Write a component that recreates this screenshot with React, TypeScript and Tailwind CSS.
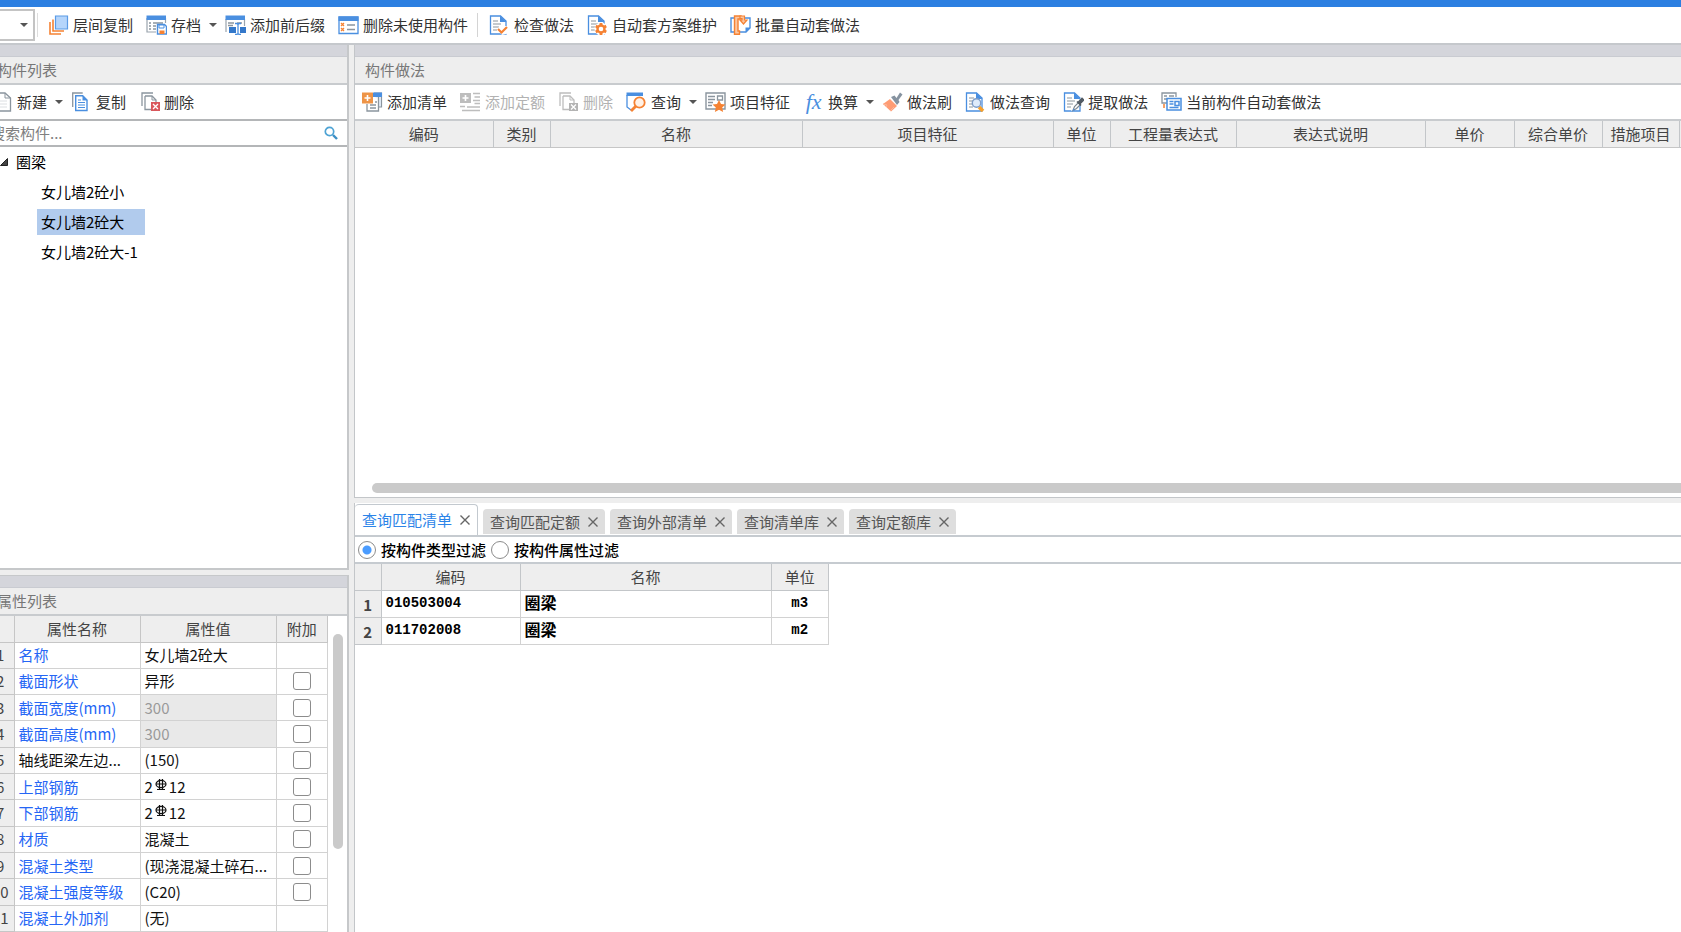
import { useState } from "react";
import type { ReactNode } from "react";

const BLUE = "#4a8fe0";
const ORANGE = "#f58233";
const GRAY = "#8b959e";

function Icon({ children }: { children: ReactNode }) {
  return (
    <svg className="h-5 w-[21px] shrink-0" viewBox="0 0 21 20" fill="none" aria-hidden="true">
      {children}
    </svg>
  );
}

// 带折角的文档轮廓
function Doc() {
  return (
    <g>
      <path d="M1.500 1h10L17 6v13H1.500z" fill="#fff" stroke={BLUE} strokeWidth="1.300" />
      <path d="M11 .500v6.500h6.500z" fill={BLUE} />
      <path d="M4 6h5M4 9h8M4 12h6M4 15h4" stroke={GRAY} strokeWidth="1.200" />
    </g>
  );
}

const icons = {
  layerCopy: (
    <Icon>
      <path d="M2 7v12h11M5 4.500v11.500h11" stroke={ORANGE} strokeWidth="1.600" />
      <path d="M7.500 1h12v13h-12z" fill="#b5d5fb" stroke="#5b9be6" strokeWidth="1.200" />
    </Icon>
  ),
  archive: (
    <Icon>
      <path d="M1 3v14h9M19.500 3v5" stroke="#9aa4ad" strokeWidth="1.200" />
      <path d="M.5.500h19.500V5H.5z" fill={BLUE} />
      <path d="M3 8h2m2 0h10M3 11h2m2 0h3M3 14h2m2 0h3" stroke={GRAY} strokeWidth="1.300" />
      <path d="M11.500 9.500h7l2 2v7.500h-9z" fill="#fff" stroke={BLUE} strokeWidth="1.400" />
      <path d="M13 10h5v3h-5z" fill="#fff" stroke={BLUE} />
      <path d="M13.500 15.500h5V19h-5z" fill={ORANGE} />
    </Icon>
  ),
  affix: (
    <Icon>
      <path d="M1 4v13M19.500 4v7" stroke="#9aa4ad" strokeWidth="1.200" />
      <path d="M.5.500H20V5H.5z" fill={BLUE} />
      <path d="M3 8h6m3 0h5M3 10.500h5" stroke={GRAY} strokeWidth="1.300" />
      <path d="M4 12h7v6H4zM15 12h6v6h-6z" fill="#3478ca" />
      <path d="M10 8.500h2l1 1 1-1h2M13 9v10m-3 .500h2l1-1 1 1h2" stroke={BLUE} strokeWidth="1.300" />
    </Icon>
  ),
  unused: (
    <Icon>
      <path d="M1 2h19v16.500H1z" fill="#fff" stroke={BLUE} strokeWidth="1.300" />
      <path d="M.5 1.500h20V6H.5z" fill={BLUE} />
      <path d="m3 8 3 3m0-3-3 3m0 2 3 3m0-3-3 3" stroke={ORANGE} strokeWidth="1.300" />
      <path d="M9 10h8M9 14.500h8" stroke={GRAY} strokeWidth="1.500" />
    </Icon>
  ),
  check: (
    <Icon>
      <Doc />
      <path d="M10 11h11v7l-8 2-4-5z" fill="#fff" />
      <path d="m9 14 3.500 3.500L18 12" stroke={ORANGE} strokeWidth="2.200" />
    </Icon>
  ),
  scheme: (
    <Icon>
      <Doc />
      <circle cx="14" cy="14" r="6.500" fill="#fff" />
      <path
        d="M14 8v12M8.800 11l10.400 6M8.800 17l10.400-6"
        stroke={ORANGE}
        strokeWidth="2.800"
      />
      <circle cx="14" cy="14" r="3.500" fill="#fff" stroke={ORANGE} strokeWidth="2.400" />
    </Icon>
  ),
  batch: (
    <Icon>
      <path d="M4 3H1v14h3M15 3h5v10l-4 4h-6" stroke={BLUE} strokeWidth="1.400" />
      <path d="M15.500 17.500v-5h5z" fill={BLUE} />
      <path d="M11 1H4.500v18.300h5V16H8V4h3z" fill="#fbc7a3" stroke={ORANGE} strokeWidth="1.400" />
      <path d="M10 1h4.500v4H17l-3.500 4L10 5h2V3.500h-2z" fill="#fbc7a3" stroke={ORANGE} strokeWidth="1.200" />
    </Icon>
  ),
  create: (
    <Icon>
      <path d="M3 1h10l5.500 5v13H3z" fill="#fff" stroke={GRAY} strokeWidth="1.300" />
      <path d="M13 1v5h5.500" stroke={GRAY} />
      <path d="M6 9h9M6 12h9M6 15h9" stroke="#dcdfe2" />
    </Icon>
  ),
  copy: (
    <Icon>
      <path d="M1.700 15V1h10" stroke={GRAY} strokeWidth="1.300" />
      <path d="M4.700 3.700h7L16 8v10.500H4.700z" fill="#fff" stroke={BLUE} strokeWidth="1.400" />
      <path d="M11.500 3.500V8.500h5z" fill={BLUE} />
      <path d="M7 8h3M7 10.500h7M7 13h7M7 15.500h7" stroke={BLUE} strokeWidth="1.200" />
    </Icon>
  ),
  remove: (
    <Icon>
      <path d="M3 14V1h11M6 4h7l4 4v4M6 4v13.500h6" stroke={GRAY} strokeWidth="1.300" />
      <path d="M13 4v4h4" stroke={GRAY} />
      <path d="M12 10h9v9h-9z" fill="#d9575c" />
      <path d="m14 12 5 5m0-5-5 5" stroke="#fff" strokeWidth="1.300" />
    </Icon>
  ),
  removeOff: (
    <Icon>
      <path d="M2 14V1h11M5 4h7l4 4v4M5 4v13.500h6" stroke="#bdbdbd" strokeWidth="1.300" />
      <path d="M12 4v4h4" stroke="#bdbdbd" />
      <path d="M11 11h9v8h-9z" fill="#b3b3b3" />
      <path d="m13 12.500 5 5m0-5-5 5" stroke="#fff" strokeWidth="1.300" />
    </Icon>
  ),
  addList: (
    <Icon>
      <path d="M12 1h7.500v14H17" fill="#e8f1fc" stroke={GRAY} strokeWidth="1.200" />
      <path d="M11 .500h9V5h-9z" fill={BLUE} />
      <path d="M16.500 5v14H5v-7" fill="#fff" stroke={GRAY} strokeWidth="1.300" />
      <path d="M8 13h6M8 16h6M13 10h2" stroke={GRAY} strokeWidth="1.300" />
      <path d="M0 .500h11v11H0z" fill="#ee9447" />
      <path d="M5.500 3v6M2.500 6h6" stroke="#fff" strokeWidth="1.600" />
    </Icon>
  ),
  addQuota: (
    <Icon>
      <path d="M0 1h11v10H0z" fill="#bdbdbd" />
      <path d="M5.500 3v6M2.500 6h6" stroke="#fff" strokeWidth="1.600" />
      <path d="M13 1.500h7M14.500 5H20M13 8.500h7M14.500 11.500H20M7 15h13M0 14.500h5M2 18.500h18" stroke="#bdbdbd" strokeWidth="1.500" />
    </Icon>
  ),
  search: (
    <Icon>
      <path d="M1 3v12l4 3" stroke={BLUE} strokeWidth="1.300" />
      <path d="M.5.500H17V4H.5z" fill={BLUE} />
      <path d="m5 19 5-5" stroke={ORANGE} strokeWidth="2.800" />
      <circle cx="13.500" cy="10.500" r="5.200" fill="#fff1e6" stroke={ORANGE} strokeWidth="1.800" />
    </Icon>
  ),
  feature: (
    <Icon>
      <path d="M1 1h19v16H1z" fill="#fff" stroke={GRAY} strokeWidth="1.400" />
      <path d="M3 4.500h7M3 7.500h7M3 10.500h5M3 13.500h4M12.500 4h5v4h-5z" stroke={GRAY} strokeWidth="1.300" />
      <path d="m14 8 2 4 4.500.500-3.300 3 .900 4.500-4.100-2.200L9.900 20l.900-4.500-3.300-3L12 12z" fill={ORANGE} />
    </Icon>
  ),
  brush: (
    <Icon>
      <path d="m1 12 7-5 7 7-6 5.500z" fill="#ff9c74" />
      <path d="m1 12 4 1-1 2M8 19l4-4" stroke="#fbb79b" />
      <path d="m9 5 3.500-1.500 2 2.500L18 .500l2.500 2-4 5.500 1 2-2.500 3z" fill="#8693a0" />
    </Icon>
  ),
  lookup: (
    <Icon>
      <Doc />
      <path d="m14 15 4 4" stroke="#f6a02c" strokeWidth="3.600" />
      <circle cx="11.500" cy="11" r="4.200" fill="#deebfb" stroke="#7d9cc8" strokeWidth="1.400" />
    </Icon>
  ),
  extract: (
    <Icon>
      <Doc />
      <path d="m8 19 2-5 8-8 3 3-8 8z" fill="#fff" />
      <path d="m10 18.500 1.500-4 4-4 2 2-4 4z" fill="#fff" stroke="#7c8791" strokeWidth="1.200" />
      <path d="m14 9.500 4 4m-2-4 3-3 1.500 1.500-3 3z" fill="#515a63" stroke="#515a63" strokeWidth="1.600" />
      <path d="m9.500 19 .800-2.500 1.700 1.700z" fill={BLUE} />
    </Icon>
  ),
  current: (
    <Icon>
      <path d="M6 11H1V1h14v4" stroke={GRAY} strokeWidth="1.300" />
      <path d="M3 4h3m2 0h5M3 7h3" stroke={GRAY} strokeWidth="1.300" />
      <path d="M3 12v4" stroke={ORANGE} strokeWidth="1.500" />
      <path d="M6 6.500h14V18H6z" fill="#fff" stroke={BLUE} strokeWidth="1.500" />
      <path d="M8.500 9.500h4m1.500 0h4v4h-4zM8.500 12h4M8.500 15.500h9" stroke={BLUE} strokeWidth="1.500" />
    </Icon>
  ),
};

function Caret() {
  return <span className="ml-1 border-x-4 border-t-4 border-x-transparent border-t-[#555]" />;
}

type ToolProps = { icon: ReactNode; label: string; caret?: boolean; disabled?: boolean };

function Tool({ icon, label, caret, disabled }: ToolProps) {
  return (
    <button
      disabled={disabled}
      className={`flex shrink-0 items-center gap-1 whitespace-nowrap ${caret ? "mr-2" : "mr-[13px]"} ${
        disabled ? "text-[#b2b2b2]" : "text-[#333]"
      }`}
    >
      {icon}
      <span>{label}</span>
      {caret && <Caret />}
    </button>
  );
}

function PanelTitle({ children }: { children: ReactNode }) {
  return (
    <>
      <div className="h-3 border-b border-[#c9cbd1] bg-[#d4d5db]" />
      <h2 className="flex h-7 items-center border-b-2 border-[#c8cbce] bg-[#eee] pl-[10px] text-[#777]">{children}</h2>
    </>
  );
}

const COLUMNS = [
  { name: "编码", width: "w-[138px]" },
  { name: "类别", width: "w-[57px]" },
  { name: "名称", width: "w-[252px]" },
  { name: "项目特征", width: "w-[251px]" },
  { name: "单位", width: "w-[57px]" },
  { name: "工程量表达式", width: "w-[126px]" },
  { name: "表达式说明", width: "w-[189px]" },
  { name: "单价", width: "w-[89px]" },
  { name: "综合单价", width: "w-[88px]" },
  { name: "措施项目", width: "w-[77px]" },
  { name: "", width: "w-[90px]" },
];

const COMPONENTS = ["女儿墙2砼小", "女儿墙2砼大", "女儿墙2砼大-1"];

const PROPS = [
  { name: "名称", value: "女儿墙2砼大", noCheck: true },
  { name: "截面形状", value: "异形" },
  { name: "截面宽度(mm)", value: "300", readOnly: true },
  { name: "截面高度(mm)", value: "300", readOnly: true },
  { name: "轴线距梁左边...", value: "(150)", plain: true },
  { name: "上部钢筋", value: "2Φ12", rebar: true },
  { name: "下部钢筋", value: "2Φ12", rebar: true },
  { name: "材质", value: "混凝土" },
  { name: "混凝土类型", value: "(现浇混凝土碎石..." },
  { name: "混凝土强度等级", value: "(C20)" },
  { name: "混凝土外加剂", value: "(无)", noCheck: true },
];

const TABS = ["查询匹配清单", "查询匹配定额", "查询外部清单", "查询清单库", "查询定额库"];

const MATCHES = [
  { code: "010503004", name: "圈梁", unit: "m3" },
  { code: "011702008", name: "圈梁", unit: "m2" },
];

// HRB400 钢筋符号
function RebarValue({ value }: { value: string }) {
  const [count, size] = value.split("Φ");
  return (
    <span className="flex items-center">
      {count}
      <svg className="mb-1 h-3 w-4" viewBox="0 0 16 12" fill="none" stroke="#111" strokeWidth="1.200" aria-label="Φ">
        <ellipse cx="8" cy="5" rx="5" ry="3.600" />
        <path d="M6.500 0v11M9.500 0v11M3 5h10M4 10.500h8" />
      </svg>
      {size}
    </span>
  );
}

function ComponentList() {
  const [selected, setSelected] = useState(1);
  return (
    <section className="flex min-h-0 flex-1 flex-col border-r-2 border-b-2 border-[#c6c8ca] bg-white">
      <PanelTitle>构件列表</PanelTitle>
      <div className="flex h-[34px] shrink-0 items-center pl-[5px]">
        <Tool icon={icons.create} label="新建" caret />
        <Tool icon={icons.copy} label="复制" />
        <Tool icon={icons.remove} label="删除" />
      </div>
      <label className="flex h-7 shrink-0 items-center border-y-2 border-[#b4b6b8] pr-[9px] pl-[3px]">
        <input className="min-w-0 flex-1 outline-none placeholder:text-[#808080]" placeholder="搜索构件..." aria-label="搜索构件" />
        <svg className="size-[14px]" viewBox="0 0 14 14" fill="none" aria-hidden="true">
          <circle cx="5.500" cy="5.500" r="4.200" stroke="#4ea3d4" strokeWidth="1.700" />
          <path d="m9 9 4 4" stroke="#3c8fc4" strokeWidth="2.400" />
        </svg>
      </label>
      <div className="flex h-[30px] shrink-0 items-center gap-2 pl-[13px] text-black">
        <svg className="size-2" viewBox="0 0 8 8" aria-hidden="true">
          <path d="M7.500.500v7h-7z" fill="#444" stroke="#222" />
        </svg>
        圈梁
      </div>
      <ul className="flex flex-col items-start gap-1 pt-[2px] pl-[50px] text-black">
        {COMPONENTS.map((name, i) => (
          <li key={name}>
            <button
              onClick={() => setSelected(i)}
              className={`h-[26px] min-w-[108px] pl-1 text-left whitespace-nowrap ${selected === i ? "bg-[#b1cbed]" : ""}`}
            >
              {name}
            </button>
          </li>
        ))}
      </ul>
    </section>
  );
}

function PropertyList() {
  return (
    <section className="mt-[5px] shrink-0 border-t border-r-2 border-[#c6c8ca] bg-white">
      <PanelTitle>属性列表</PanelTitle>
      <div className="flex">
        <table className="h-[316px] w-[341px] table-fixed border-collapse">
          <thead>
            <tr className="h-[26px] bg-[#eee] text-[#444]">
              <th className="w-[27px] border-r border-b border-[#c6c6c6]" />
              <th className="w-[126px] border-r border-b border-[#c6c6c6] font-normal">属性名称</th>
              <th className="w-[136px] border-r border-b border-[#c6c6c6] font-normal">属性值</th>
              <th className="border-r border-b border-[#c6c6c6] font-normal">附加</th>
            </tr>
          </thead>
          <tbody>
            {PROPS.map((prop, i) => (
              <tr key={prop.name}>
                <td className="border-r border-b border-[#c6c6c6] bg-[#eee] text-center text-[#444]">{i + 1}</td>
                <td
                  className={`border-r border-b border-[#d2d2d2] pl-1 whitespace-nowrap ${
                    prop.plain ? "text-[#111]" : "text-[#2566f5]"
                  }`}
                >
                  {prop.name}
                </td>
                <td
                  className={`border-r border-b border-[#d2d2d2] pl-1 whitespace-nowrap ${
                    prop.readOnly ? "bg-[#e9e9e9] text-[#999]" : "text-[#111]"
                  }`}
                >
                  {prop.rebar ? <RebarValue value={prop.value} /> : prop.value}
                </td>
                <td className="border-r border-b border-[#d2d2d2] text-center">
                  {!prop.noCheck && (
                    <input
                      type="checkbox"
                      aria-label={`附加 ${prop.name}`}
                      className="mx-auto block size-[18px] appearance-none rounded-[3px] border border-[#8c8c8c] bg-white checked:bg-[#4a8fe0]"
                    />
                  )}
                </td>
              </tr>
            ))}
          </tbody>
        </table>
        <div className="mx-auto mt-[18px] h-[215px] w-[10px] rounded-full bg-[#cacaca]" />
      </div>
    </section>
  );
}

function MethodPanel() {
  return (
    <section className="flex min-h-0 flex-1 flex-col border-b border-l border-[#c3c6c9] bg-white">
      <PanelTitle>构件做法</PanelTitle>
      <div className="flex h-[34px] shrink-0 items-center pl-[7px]">
        <Tool icon={icons.addList} label="添加清单" />
        <Tool icon={icons.addQuota} label="添加定额" disabled />
        <Tool icon={icons.removeOff} label="删除" disabled />
        <Tool icon={icons.search} label="查询" caret />
        <Tool icon={icons.feature} label="项目特征" />
        <Tool
          icon={<i className="w-[21px] font-['Liberation_Serif',serif] text-[22px] leading-5 text-[#4a8fe0]">fx</i>}
          label="换算"
          caret
        />
        <Tool icon={icons.brush} label="做法刷" />
        <Tool icon={icons.lookup} label="做法查询" />
        <Tool icon={icons.extract} label="提取做法" />
        <Tool icon={icons.current} label="当前构件自动套做法" />
      </div>
      <div className="overflow-hidden">
        <table className="w-[1414px] table-fixed border-collapse">
          <thead>
            <tr className="h-[27px] border-t-2 border-b border-t-[#c8cbce] border-b-[#c6c6c6] bg-[#eee] text-[#444]">
              {COLUMNS.map((col) => (
                <th key={col.name} className={`${col.width} border-r border-[#c3c6c9] p-0 font-normal whitespace-nowrap`}>
                  {col.name}
                </th>
              ))}
            </tr>
          </thead>
        </table>
      </div>
      <div className="mt-auto mb-1 ml-[17px] h-[10px] rounded-l-full bg-[#cacaca]" />
    </section>
  );
}

function QueryPanel() {
  const [tab, setTab] = useState(0);
  return (
    <section className="mt-[5px] flex h-[429px] shrink-0 flex-col border-l border-[#c3c6c9] bg-white">
      <div className="flex h-8 shrink-0 items-end gap-[5px]">
        {TABS.map((name, i) => (
          <div
            key={name}
            className={`flex items-center gap-2 rounded-t px-[7px] whitespace-nowrap ${
              tab === i ? "h-[31px] border-t border-r border-[#c3c9cf] bg-white text-[#2b84e8]" : "mb-px h-[25px] bg-[#dedede] text-[#555]"
            }`}
          >
            <button onClick={() => setTab(i)}>{name}</button>
            <button aria-label={`关闭 ${name}`}>
              <svg className="size-[10px]" viewBox="0 0 10 10" stroke="#666" strokeWidth="1.400" aria-hidden="true">
                <path d="m.500.500 9 9M9.500.500l-9 9" />
              </svg>
            </button>
          </div>
        ))}
      </div>
      <div className="flex h-[29px] shrink-0 items-center gap-[5px] border-y-2 border-[#c6cbd0] pl-[3px] font-medium text-black">
        {["按构件类型过滤", "按构件属性过滤"].map((name, i) => (
          <label key={name} className="flex items-center gap-[5px] whitespace-nowrap">
            <input
              type="radio"
              name="filter"
              defaultChecked={i === 0}
              className="size-[18px] appearance-none rounded-full border border-[#8c8c8c] bg-white checked:bg-[radial-gradient(circle,#4a9cff_4px,white_5px)]"
            />
            {name}
          </label>
        ))}
      </div>
      <table className="w-[474px] table-fixed border-collapse">
        <thead>
          <tr className="h-[26px] bg-[#eee] text-[#444]">
            <th className="w-[26px] border-r border-b border-[#c3c6c9]" />
            <th className="w-[139px] border-r border-b border-[#c3c6c9] font-normal">编码</th>
            <th className="w-[251px] border-r border-b border-[#c3c6c9] font-normal">名称</th>
            <th className="border-r border-b border-[#c3c6c9] font-normal">单位</th>
          </tr>
        </thead>
        <tbody>
          {MATCHES.map((row, i) => (
            <tr key={row.code} className="h-[27px] font-bold text-black">
              <td className="border-r border-b border-[#c3c6c9] bg-[#eee] p-0 pt-[2px] text-center text-[#444]">{i + 1}</td>
              <td className="border-r border-b border-[#d2d2d2] p-0 pb-[2px] pl-1 font-['Liberation_Mono',monospace] text-sm">{row.code}</td>
              <td className="border-r border-b border-[#d2d2d2] p-0 pb-[3px] pl-1 text-base leading-5">{row.name}</td>
              <td className="border-r border-b border-[#d2d2d2] p-0 pb-[2px] text-center font-['Liberation_Mono',monospace] text-sm">
                {row.unit}
              </td>
            </tr>
          ))}
        </tbody>
      </table>
    </section>
  );
}

export default function App() {
  return (
    <div className="flex h-screen flex-col overflow-hidden bg-[#eee] font-['Noto_Sans_CJK_SC',sans-serif] text-[15px] leading-5">
      <div className="h-[7px] shrink-0 bg-[#2c7fe1]" />
      <header className="flex h-[38px] shrink-0 items-center border-b-2 border-[#c5c8cc] bg-white">
        <button className="flex h-8 w-[35px] items-center justify-end border-2 border-l-0 border-[#c4c4c4] pr-[5px]" aria-label="楼层">
          <Caret />
        </button>
        <div className="mr-[10px] ml-[2px] h-6 w-px bg-[#ddd]" />
        <Tool icon={icons.layerCopy} label="层间复制" />
        <Tool icon={icons.archive} label="存档" caret />
        <Tool icon={icons.affix} label="添加前后缀" />
        <Tool icon={icons.unused} label="删除未使用构件" />
        <div className="-ml-1 mr-[11px] h-6 w-px bg-[#d4d4d4]" />
        <Tool icon={icons.check} label="检查做法" />
        <Tool icon={icons.scheme} label="自动套方案维护" />
        <Tool icon={icons.batch} label="批量自动套做法" />
      </header>
      <div className="flex min-h-0 flex-1 gap-[5px]">
        <aside className="-ml-[13px] flex w-[362px] shrink-0 flex-col">
          <ComponentList />
          <PropertyList />
        </aside>
        <main className="flex min-w-0 flex-1 flex-col">
          <MethodPanel />
          <QueryPanel />
        </main>
      </div>
    </div>
  );
}
